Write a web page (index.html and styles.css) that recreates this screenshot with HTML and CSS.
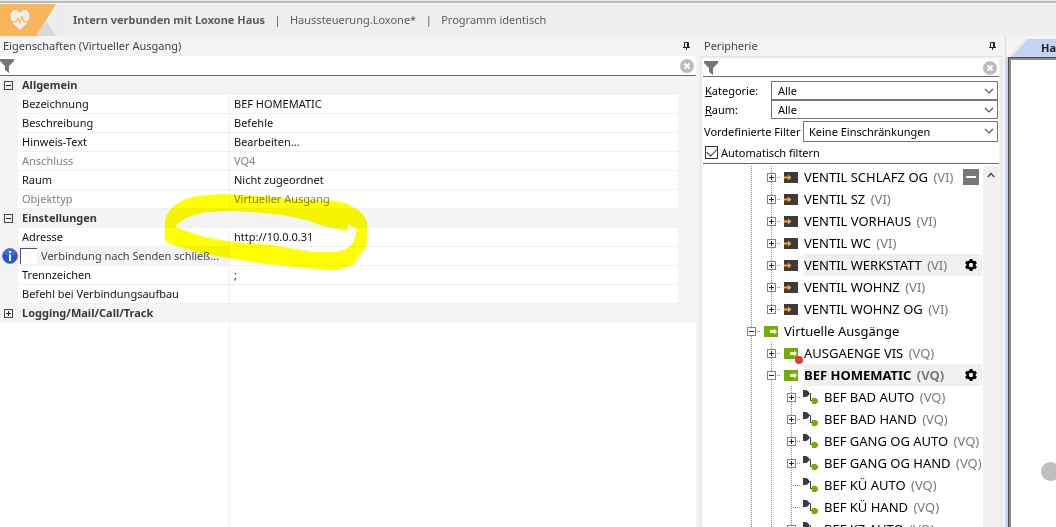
FILE: index.html
```html
<!DOCTYPE html>
<html lang="de">
<head>
<meta charset="utf-8">
<title>Loxone Config</title>
<link rel="stylesheet" href="styles.css">
</head>
<body>
<svg class="defs" width="0" height="0" aria-hidden="true">
  <symbol id="funnel" viewBox="0 0 14 14"><path d="M0 0h14v2L9 7v7l-4-3V7L0 2z" fill="#757575"/></symbol>
  <symbol id="clear" viewBox="0 0 14 14"><circle cx="7" cy="7" r="7" fill="#bdbdbd"/><path d="M4.500 4.500l5 5M9.500 4.500l-5 5" stroke="#fff" stroke-width="2"/></symbol>
  <symbol id="pin" viewBox="0 0 7 8"><path d="M1.500 5V.5h4V5M4.500 0v5M0 5.500h7M3.500 6v2" fill="none" stroke="#222"/></symbol>
  <symbol id="chev" viewBox="0 0 10 6"><path d="M1 1l4 4 4-4" fill="none" stroke="#555" stroke-width="1.200"/></symbol>
  <symbol id="vi" viewBox="0 0 14 11"><path d="M0 0h14v11H0z" fill="#3c3c3c"/><path d="M0 4.500h4V2.500l3.500 3L4 8.500v-2H0z" fill="#ffa02e"/></symbol>
  <symbol id="vq" viewBox="0 0 14 11"><path d="M0 0h14v11H0z" fill="#72b000"/><path d="M6 4h4V2.500l3 3-3 3V7H6z" fill="#fff"/></symbol>
  <symbol id="cmd" viewBox="0 0 15 14"><path d="M0 0h3.500L6 2v3L3.500 7H0z" fill="#3c3c3c"/><path d="M6 3.500h1.500v7H10" fill="none" stroke="#3c3c3c"/><path d="M9 8h4l2 2v2l-2 2H9z" fill="#72b000"/></symbol>
  <symbol id="gear" viewBox="0 0 12 12"><circle cx="6" cy="6" r="3.500" fill="none" stroke="#000" stroke-width="2.600"/><path d="M6 0v2M6 10v2M.8 3l1.700 1M9.500 8l1.700 1M.8 9l1.700-1M9.500 4l1.700-1" stroke="#000" stroke-width="3"/></symbol>
</svg>

<header class="status">
  <svg class="logo" viewBox="0 0 64 32" width="64" height="32" aria-hidden="true">
    <path d="M56 0h8v32h-8z" fill="#ececec"/><path d="M46 17L56 32H36z" fill="#d8d8d8"/><path d="M0 0h56L36 32H0z" fill="#f9b55b"/>
    <path d="M20 26C13 20 10.500 16 10.500 12 10.500 5 17 4 20 9 23 4 29.500 5 29.500 12 29.500 16 27 20 20 26z" fill="#f1efec"/>
    <path d="M10 17.500h6l2-3 2 4 2-6 2 5h6" fill="none" stroke="#f9b55b" stroke-width="1.200"/>
  </svg>
  <strong>Intern verbunden mit Loxone Haus</strong><i>|</i><span>Haussteuerung.Loxone*</span><i>|</i><span>Programm identisch</span>
</header>

<main class="work">
  <section class="props">
    <div class="caption"><h2>Eigenschaften (Virtueller Ausgang)</h2><button class="icon" aria-label="Anheften"><svg width="7" height="8"><use href="#pin"/></svg></button></div>
    <div class="filter"><svg width="14" height="14"><use href="#funnel"/></svg><input type="text" aria-label="Eigenschaften filtern"><button class="icon" aria-label="Filter leeren"><svg width="14" height="14"><use href="#clear"/></svg></button></div>
    <table class="grid">
      <colgroup><col class="c-gut"><col class="c-name"><col><col class="c-gut"></colgroup>
      <tbody>
      <tr class="group"><th class="gut"><button class="exp dark" aria-label="Allgemein"></button></th><th colspan="3">Allgemein</th></tr>
      <tr><td class="gut"></td><td class="name">Bezeichnung</td><td>BEF HOMEMATIC</td><td class="edge"></td></tr>
      <tr><td class="gut"></td><td class="name">Beschreibung</td><td>Befehle</td><td class="edge"></td></tr>
      <tr><td class="gut"></td><td class="name">Hinweis-Text</td><td>Bearbeiten...</td><td class="edge"></td></tr>
      <tr class="off"><td class="gut"></td><td class="name">Anschluss</td><td>VQ4</td><td class="edge"></td></tr>
      <tr><td class="gut"></td><td class="name">Raum</td><td>Nicht zugeordnet</td><td class="edge"></td></tr>
      <tr class="off"><td class="gut"></td><td class="name">Objekttyp</td><td>Virtueller Ausgang</td><td class="edge"></td></tr>
      <tr class="group"><th class="gut"><button class="exp dark" aria-label="Einstellungen"></button></th><th colspan="3">Einstellungen</th></tr>
      <tr><td class="gut"></td><td class="name">Adresse</td><td>http://10.0.0.31</td><td class="edge"></td></tr>
      <tr><td class="gut"><svg class="info" width="16" height="16" viewBox="0 0 16 16"><circle cx="8" cy="8" r="7.500" fill="#2456c4" stroke="#5b7fc4"/><path d="M2 6a6 5 0 0 1 12 0 9 6 0 0 1-12 0z" fill="#4f83e2" opacity=".6"/><path d="M8 3v2M8 6.500V13" stroke="#fff" stroke-width="2"/></svg></td><td class="name check"><label><input type="checkbox"><span>Verbindung nach Senden schließ...</span></label></td><td></td><td class="edge"></td></tr>
      <tr><td class="gut"></td><td class="name">Trennzeichen</td><td>;</td><td class="edge"></td></tr>
      <tr><td class="gut"></td><td class="name">Befehl bei Verbindungsaufbau</td><td></td><td class="edge"></td></tr>
      <tr class="group"><th class="gut"><button class="exp dark plus" aria-label="Logging"></button></th><th colspan="3">Logging/Mail/Call/Track</th></tr>
      </tbody>
    </table>
    <div class="rest"></div>
    <svg class="marker" width="210" height="84" viewBox="160 190 210 84" aria-hidden="true"><path fill-rule="evenodd" fill="#ff0" d="M167 215C173 203 187 197 200 196L220 194 240 195 283 198 333 201C343 202 347 203 350 206 359 209 364 214 367 222V242C366 250 361 254 358 256 357 262 354 265 350 266L337 270H327L267 264 233 259 200 253 180 247C171 245 167 243 165 239V220zM175 227L192 233 203 237 233 242 272 245 283 247 313 252H335C342 251 346 250 349 247 353 243 355 240 355 237L357 229 348 224V230H342L333 228 320 225 307 220 283 215 250 212 233 211 208 212C192 214 180 220 175 227z"/></svg>
  </section>

  <section class="peri">
    <div class="caption"><h2>Peripherie</h2><button class="icon" aria-label="Anheften"><svg width="7" height="8"><use href="#pin"/></svg></button></div>
    <div class="frame">
      <div class="filter"><svg width="14" height="14"><use href="#funnel"/></svg><input type="text" aria-label="Peripherie filtern"><button class="icon" aria-label="Filter leeren"><svg width="14" height="14"><use href="#clear"/></svg></button></div>
      <form class="opts">
        <div class="pair">
          <label for="kat"><u>K</u>ategorie:</label><div class="sel"><select id="kat"><option>Alle</option></select><svg width="10" height="6"><use href="#chev"/></svg></div>
          <label for="raum"><u>R</u>aum:</label><div class="sel"><select id="raum"><option>Alle</option></select><svg width="10" height="6"><use href="#chev"/></svg></div>
        </div>
        <div class="pre"><label for="vf">Vordefinierte Filter</label><div class="sel"><select id="vf"><option>Keine Einschränkungen</option></select><svg width="10" height="6"><use href="#chev"/></svg></div></div>
        <label class="auto"><input type="checkbox" checked><span>Automatisch filtern</span></label>
      </form>
      <div class="treebox">
        <ul class="tree">
          <li><i class="g"></i><i class="g h"><button class="exp plus"></button></i><svg class="ic" width="14" height="11"><use href="#vi"/></svg><span class="t">VENTIL SCHLAFZ OG <em>(VI)</em></span><button class="minus" aria-label="Entfernen"></button></li>
          <li><i class="g"></i><i class="g h"><button class="exp plus"></button></i><svg class="ic" width="14" height="11"><use href="#vi"/></svg><span class="t">VENTIL SZ <em>(VI)</em></span></li>
          <li><i class="g"></i><i class="g h"><button class="exp plus"></button></i><svg class="ic" width="14" height="11"><use href="#vi"/></svg><span class="t">VENTIL VORHAUS <em>(VI)</em></span></li>
          <li><i class="g"></i><i class="g h"><button class="exp plus"></button></i><svg class="ic" width="14" height="11"><use href="#vi"/></svg><span class="t">VENTIL WC <em>(VI)</em></span></li>
          <li><i class="g"></i><i class="g h"><button class="exp plus"></button></i><svg class="ic" width="14" height="11"><use href="#vi"/></svg><span class="t hot"><span>VENTIL WERKSTATT <em>(VI)</em></span><svg class="gear" width="12" height="12"><use href="#gear"/></svg></span></li>
          <li><i class="g"></i><i class="g h"><button class="exp plus"></button></i><svg class="ic" width="14" height="11"><use href="#vi"/></svg><span class="t">VENTIL WOHNZ <em>(VI)</em></span></li>
          <li><i class="g"></i><i class="g h last"><button class="exp plus"></button></i><svg class="ic" width="14" height="11"><use href="#vi"/></svg><span class="t">VENTIL WOHNZ OG <em>(VI)</em></span></li>
          <li><i class="g h"><button class="exp"></button></i><svg class="ic" width="14" height="11"><use href="#vq"/></svg><span class="t">Virtuelle Ausgänge</span></li>
          <li><i class="g"></i><i class="g h"><button class="exp plus"></button></i><span class="ic badge"><svg width="14" height="11"><use href="#vq"/></svg></span><span class="t">AUSGAENGE VIS <em>(VQ)</em></span></li>
          <li><i class="g"></i><i class="g h"><button class="exp"></button></i><svg class="ic" width="14" height="11"><use href="#vq"/></svg><span class="t hot sel-row"><span>BEF HOMEMATIC <em>(VQ)</em></span><svg class="gear" width="12" height="12"><use href="#gear"/></svg></span></li>
          <li><i class="g"></i><i class="g"></i><i class="g h"><button class="exp plus"></button></i><svg class="ic cmd" width="15" height="14"><use href="#cmd"/></svg><span class="t">BEF BAD AUTO <em>(VQ)</em></span></li>
          <li><i class="g"></i><i class="g"></i><i class="g h"><button class="exp plus"></button></i><svg class="ic cmd" width="15" height="14"><use href="#cmd"/></svg><span class="t">BEF BAD HAND <em>(VQ)</em></span></li>
          <li><i class="g"></i><i class="g"></i><i class="g h"><button class="exp plus"></button></i><svg class="ic cmd" width="15" height="14"><use href="#cmd"/></svg><span class="t">BEF GANG OG AUTO <em>(VQ)</em></span></li>
          <li><i class="g"></i><i class="g"></i><i class="g h"><button class="exp plus"></button></i><svg class="ic cmd" width="15" height="14"><use href="#cmd"/></svg><span class="t">BEF GANG OG HAND <em>(VQ)</em></span></li>
          <li><i class="g"></i><i class="g"></i><i class="g h"></i><svg class="ic cmd" width="15" height="14"><use href="#cmd"/></svg><span class="t">BEF KÜ AUTO <em>(VQ)</em></span></li>
          <li><i class="g"></i><i class="g"></i><i class="g h"></i><svg class="ic cmd" width="15" height="14"><use href="#cmd"/></svg><span class="t">BEF KÜ HAND <em>(VQ)</em></span></li>
          <li><i class="g"></i><i class="g"></i><i class="g h"><button class="exp plus"></button></i><svg class="ic cmd" width="15" height="14"><use href="#cmd"/></svg><span class="t">BEF KZ AUTO <em>(VQ)</em></span></li>
        </ul>
        <div class="scroll"><svg width="8" height="6" viewBox="0 0 8 6"><path d="M.7 5L4 1.500 7.300 5" fill="none" stroke="#555" stroke-width="1.800"/></svg></div>
      </div>
    </div>
  </section>

  <section class="editor">
    <div class="tabs"><svg width="20" height="18" viewBox="0 0 20 18" aria-hidden="true"><path d="M2 18L18 1h2v17z" fill="#c3d3f4"/><path d="M1 17L17 .5h3" fill="none" stroke="#d9d9d9"/></svg><button class="tab">Haus</button></div>
    <div class="canvas"><div class="page"><span class="dot"></span></div></div>
  </section>
</main>
</body>
</html>
```
FILE: styles.css
```css
* { box-sizing: border-box; }
html, body { height: 100%; }
body {
  margin: 0;
  display: flex;
  flex-direction: column;
  overflow: hidden;
  background: #f4f4f4;
  color: #111;
  font: 11px/18px "Noto Sans", "Open Sans", sans-serif;
}
button, input, select { font: inherit; color: inherit; margin: 0; }
button { padding: 0; border: 0; background: none; }
svg { display: block; flex: none; }
.defs { position: absolute; }
i, em { font-style: normal; }

.status {
  display: flex;
  align-items: center;
  flex: none;
  height: 36px;
  padding-top: 3px;
  border-top: 1px solid #e8eae8;
  background: linear-gradient(#b9bdb9 0 2px, #f8f8f8 2px 3px, #efefef 3px);
  color: #5c5c64;
}
.logo { margin-right: 9px; }
.status i { width: 25px; text-align: center; }

.work {
  flex: 1;
  min-height: 0;
  display: grid;
  grid-template-columns: minmax(0, 1fr) 303px 53px;
  grid-template-rows: minmax(0, 1fr);
}
.caption {
  display: flex;
  align-items: center;
  justify-content: space-between;
  flex: none;
  height: 20px;
  padding: 0 6px 0 3px;
}
.caption h2 { margin: 0; font-size: 11px; font-weight: 400; color: #444; }
.filter {
  display: flex;
  align-items: center;
  flex: none;
  height: 20px;
  background: #fff;
  border-bottom: 1px solid #6b676b;
  padding-right: 2px;
}
.filter input { flex: 1; min-width: 0; height: 18px; border: 0; background: none; outline: 0; }

.props { position: relative; display: flex; flex-direction: column; margin-right: 4px; }
.grid { width: 100%; table-layout: fixed; border-collapse: separate; border-spacing: 0; background: #fff; }
.c-gut { width: 18px; }
.c-name { width: 212px; }
.grid th, .grid td { height: 19px; padding: 0 4px; line-height: 18px; text-align: left; white-space: nowrap; overflow: hidden; }
.grid td, .grid th { border-bottom: 1px solid #f1f1f1; }
.grid .gut { padding: 0 0 0 4px; background: #f4f4f4; border-bottom-color: #f4f4f4; }
.grid td.gut { padding-left: 2px; }
.grid .name { border-right: 1px solid #f1f1f1; }
.grid .edge { background: #f4f4f4; }
.grid th, .grid .edge { border-bottom-color: #f4f4f4; }
.group th { background: #f4f4f4; color: #3a3a3e; }
.off td { color: #808080; }
.grid .check { background: #f4f4f4; padding: 0; color: #444; }
.check label { display: flex; align-items: center; gap: 4px; height: 18px; padding-left: 2px; }
.check input { appearance: none; width: 17px; height: 16px; background: #fff; border: solid #555; border-width: 1px 0 0 1px; }
.rest { flex: 1; background: linear-gradient(90deg, #fff 229px, #f1f1f1 229px 230px, #fff 230px); }
.marker { position: absolute; left: 160px; top: 154px; mix-blend-mode: multiply; pointer-events: none; }

.exp {
  display: block;
  flex: none;
  width: 9px;
  height: 9px;
  border: 1px solid #848484;
  background: linear-gradient(#222, #222) center / 5px 1px no-repeat #fff;
}
.exp.plus { background: linear-gradient(#222, #222) center / 5px 1px no-repeat, linear-gradient(#222, #222) center / 1px 5px no-repeat #fff; }
.exp.dark { border-color: #444; background-color: #f4f4f4; }

.peri { display: flex; flex-direction: column; min-width: 0; padding-right: 1px; }
.peri .caption { padding: 0 6px 0 4px; }
.frame { flex: 1; min-height: 0; display: flex; flex-direction: column; border: 1px solid #e3e3e3; border-bottom: 0; padding: 2px 2px 0; }
.frame .filter { height: 18px; padding-left: 1px; }
.opts { background: #fff; color: #000; padding: 4px 1px 0; border-bottom: 1px solid #6b676b; }
.pair { display: grid; grid-template-columns: 66px 1fr; align-items: center; padding-left: 1px; }
.sel { position: relative; flex: 1; display: flex; }
.sel select { appearance: none; width: 100%; height: 19px; padding: 0 6px; border: 1px solid #767676; border-radius: 0; background: #fff; line-height: 16px; }
.sel svg { position: absolute; right: 4px; top: 7px; }
.pre { display: flex; align-items: center; gap: 3px; padding-top: 2px; }
.pre label { width: 96px; white-space: nowrap; }
.pre select { height: 21px; padding: 0 5px; }
.auto { display: flex; align-items: center; gap: 3px; height: 21px; padding-left: 1px; }
.auto input { appearance: none; display: grid; place-items: center; width: 13px; height: 13px; border: 1px solid #333; }
.auto input:checked::before { content: ""; width: 9px; height: 5px; margin-bottom: 3px; border: solid #333; border-width: 0 0 1px 1px; transform: rotate(-45deg); }
.treebox { flex: 1; min-height: 0; display: flex; background: #fff; padding-top: 2px; overflow: hidden; }
.tree { flex: 1; min-width: 0; margin: 0; padding: 0 1px 0 38px; list-style: none; font-size: 13px; color: #000; }
.tree li { display: flex; align-items: center; height: 22px; white-space: nowrap; }
.g { display: flex; align-items: center; justify-content: center; flex: none; width: 20px; height: 22px; padding-left: 1px; background: repeating-linear-gradient(#8a8a8a 0 1px, #fff 1px 2px) 10px 0 / 1px 100% no-repeat; }
.g.h { background: repeating-linear-gradient(#8a8a8a 0 1px, #fff 1px 2px) 10px 0 / 1px 100% no-repeat, repeating-linear-gradient(90deg, #8a8a8a 0 1px, #fff 1px 2px) 10px 11px / 10px 1px no-repeat; }
.g.last { background-size: 1px 12px, 10px 1px; }
.ic { flex: none; margin: 0 6px 0 3px; }
.ic.cmd { margin: 0 6px 0 2px; }
.badge { position: relative; }
.badge::after { content: ""; position: absolute; left: 11px; top: 8px; width: 8px; height: 8px; border-radius: 50%; background: #e63946; }
.t { flex: 1; min-width: 0; overflow: hidden; line-height: 22px; }
.tree em { margin-left: 2px; color: #7a7a7a; }
.hot { display: flex; align-items: center; background: #f0f0f0; }
.sel-row { font-weight: 700; }
.gear { margin-left: auto; margin-right: 5px; }
.minus { flex: none; width: 16px; height: 16px; margin-right: 3px; background: linear-gradient(#fff, #fff) center / 10px 2px no-repeat #787878; }
.scroll { flex: none; width: 16px; background: #f0f0f0; padding: 6px 4px; }

.editor { display: flex; flex-direction: column; min-width: 0; overflow: hidden; border-left: 1px solid #dcdcdc; margin-left: 2px; }
.tabs { display: flex; flex: none; height: 21px; padding: 3px 0 0 3px; }
.tab { flex: none; padding: 0 12px; height: 18px; background: #c3d3f4; font-weight: 700; color: #222; }
.canvas { flex: 1; padding-left: 2px; background: #c3d3f4; }
.page { height: 100%; background: #fff; border: solid #4a4a4a; border-width: 1px 0 0 1px; box-shadow: inset 2px 2px #8d8d8d; position: relative; overflow: hidden; }
.dot { position: absolute; left: 32px; top: 404px; width: 19px; height: 19px; border-radius: 50%; background: #bebebe; }
```
